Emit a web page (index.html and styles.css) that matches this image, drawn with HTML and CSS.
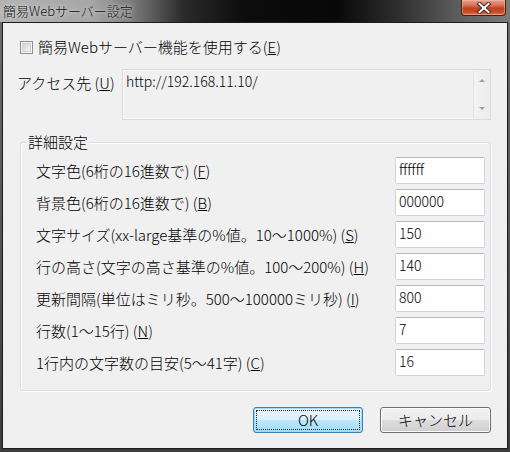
FILE: index.html
```html
<!DOCTYPE html>
<html lang="ja">
<head>
<meta charset="utf-8">
<title>簡易Webサーバー設定</title>
<link rel="stylesheet" href="styles.css">
</head>
<body>
<div class="window">
  <div class="titlebar">
    <span class="title">簡易Webサーバー設定</span>
    <span class="close-btn">
      <svg width="18" height="12" viewBox="0 0 18 12">
        <path d="M4.5 2 L13.5 10 M13.5 2 L4.5 10" stroke="#3a2a2a" stroke-width="4" stroke-linecap="square" fill="none"/>
        <path d="M4.5 2 L13.5 10 M13.5 2 L4.5 10" stroke="#ffffff" stroke-width="2" stroke-linecap="square" fill="none"/>
      </svg>
    </span>
  </div>
  <div class="client">
    <label class="check-row">
      <input type="checkbox" class="check">
      <span>簡易Webサーバー機能を使用する(<span class="key">E</span>)</span>
    </label>
    <div class="access-row">
      <span class="access-label">アクセス先 (<span class="key">U</span>)</span>
      <div class="addr">
        <div class="addr-text">http://192.168.11.10/</div>
        <div class="scroll">
          <span class="arrow-up"></span>
          <span class="arrow-down"></span>
        </div>
      </div>
    </div>
    <div class="group">
      <span class="group-title">詳細設定</span>
      <div class="field"><span class="lbl">文字色(6桁の16進数で) (<span class="key">F</span>)</span><input class="txt" type="text" value="ffffff"></div>
      <div class="field"><span class="lbl">背景色(6桁の16進数で) (<span class="key">B</span>)</span><input class="txt" type="text" value="000000"></div>
      <div class="field"><span class="lbl">文字サイズ(xx-large基準の%値。10～1000%) (<span class="key">S</span>)</span><input class="txt" type="text" value="150"></div>
      <div class="field"><span class="lbl">行の高さ(文字の高さ基準の%値。100～200%) (<span class="key">H</span>)</span><input class="txt" type="text" value="140"></div>
      <div class="field"><span class="lbl">更新間隔(単位はミリ秒。500～100000ミリ秒) (<span class="key">I</span>)</span><input class="txt" type="text" value="800"></div>
      <div class="field"><span class="lbl">行数(1～15行) (<span class="key">N</span>)</span><input class="txt" type="text" value="7"></div>
      <div class="field"><span class="lbl">1行内の文字数の目安(5～41字) (<span class="key">C</span>)</span><input class="txt" type="text" value="16"></div>
    </div>
    <div class="buttons">
      <button class="btn btn-ok">OK</button>
      <button class="btn btn-cancel">キャンセル</button>
    </div>
  </div>
</div>
</body>
</html>
```
FILE: styles.css
```css
html, body {
  margin: 0;
  padding: 0;
  background: #1a1a1a;
}
body {
  font-family: "Noto Sans CJK JP", "Noto Sans", sans-serif;
  font-size: 15px;
  font-weight: 300;
  color: #000;
}
.window {
  width: 510px;
  height: 452px;
  display: flex;
  flex-direction: column;
  background: linear-gradient(to bottom, #6e6e6e, #3c3c3c);
  box-sizing: border-box;
}
.titlebar {
  height: 22px;
  flex: 0 0 22px;
  display: flex;
  justify-content: space-between;
  align-items: flex-start;
  background: linear-gradient(to right, #b4b4b4 0%, #a6a6a6 18%, #7a7a7a 26%, #2a2a2a 36%, #0c0c0c 48%, #080808 66%, #2e2e2e 78%, #5e5e5e 90%, #7a7a7a 100%);
}
.title {
  font-size: 13px;
  line-height: 18px;
  margin: 2px 0 0 3px;
  color: #111;
  text-shadow: 0 0 6px rgba(230,230,230,0.9), 0 0 3px rgba(220,220,220,0.8);
}
.close-btn {
  width: 45px;
  height: 16px;
  margin-right: 4px;
  box-sizing: border-box;
  border: 1px solid #4a1c14;
  border-top: none;
  border-radius: 0 0 4px 4px;
  background: linear-gradient(to bottom, #e4a08c 0%, #d6745a 35%, #c2401f 55%, #c84a28 80%, #e07a52 100%);
  box-shadow: inset 0 0 0 1px rgba(255,200,180,0.45);
  display: flex;
  align-items: center;
  justify-content: center;
}
.close-btn svg {
  display: block;
}
.client {
  flex: 1;
  margin: 0 2px 3px 2px;
  border: 1px solid #1b1b1b;
  background: #f0f0f0;
  padding: 0 16px 0 14px;
  display: flex;
  flex-direction: column;
}
.key {
  text-decoration: underline;
  text-underline-offset: 1px;
}
.check-row {
  display: flex;
  align-items: center;
  gap: 5px;
  height: 18px;
  line-height: 18px;
  margin-top: 15px;
  padding-left: 3px;
}
.check {
  appearance: none;
  -webkit-appearance: none;
  margin: 0;
  width: 13px;
  height: 13px;
  box-sizing: border-box;
  border: 1px solid #8e8f8f;
  background: linear-gradient(135deg, #c9c9c9 0%, #e6e6e6 55%, #f8f8f8 100%);
  box-shadow: inset 0 0 0 1px #f4f4f4, inset 0 0 0 2px #d2d2d2;
}
.access-row {
  display: flex;
  margin-top: 13px;
  height: 51px;
}
.access-label {
  flex: 0 0 105px;
  line-height: 18px;
  padding-top: 5px;
}
.addr {
  flex: 1;
  display: flex;
  box-sizing: border-box;
  border: 1px solid #d9dcdf;
  box-shadow: inset 0 0 0 1px #fafafa;
  background: #f0f0f0;
}
.addr-text {
  flex: 1;
  font-size: 14px;
  line-height: 18px;
  padding: 2px 3px;
}
.scroll {
  flex: 0 0 16px;
  border-left: 1px solid #e4e4e4;
  background: linear-gradient(to right, #f3f3f3, #ececec);
  display: flex;
  flex-direction: column;
  justify-content: space-between;
  align-items: center;
  padding: 9px 0 9px;
}
.arrow-up, .arrow-down {
  width: 0;
  height: 0;
  border-left: 3px solid transparent;
  border-right: 3px solid transparent;
}
.arrow-up {
  border-bottom: 3px solid #a0a0a0;
}
.arrow-down {
  border-top: 3px solid #a0a0a0;
}
.group {
  position: relative;
  margin: 22px 0 0 3px;
  border: 1px solid #d5dfe5;
  border-radius: 3px;
  box-shadow: inset 1px 1px 0 #ffffff, 1px 1px 0 #ffffff;
  padding: 14px 5px 14px 15px;
  display: flex;
  flex-direction: column;
  gap: 5px;
}
.group-title {
  position: absolute;
  top: -10px;
  left: 5px;
  padding: 0 2px;
  background: #f0f0f0;
  line-height: 18px;
}
.field {
  display: flex;
  align-items: center;
  justify-content: space-between;
  height: 27px;
}
.lbl {
  line-height: 18px;
  white-space: nowrap;
}
.txt {
  width: 90px;
  height: 27px;
  box-sizing: border-box;
  margin: 0;
  border: 1px solid #d0d3d6;
  border-top-color: #b8bbbf;
  border-radius: 2px;
  background: #ffffff;
  font-family: "Noto Sans CJK JP", "Noto Sans", sans-serif;
  font-size: 14px;
  font-weight: 300;
  padding: 0 3px 3px 3px;
  color: #000;
  outline: none;
}
.buttons {
  display: flex;
  justify-content: flex-end;
  gap: 17px;
  margin-top: 16px;
}
.btn {
  height: 26px;
  box-sizing: border-box;
  border-radius: 3px;
  font-family: "Noto Sans CJK JP", "Noto Sans", sans-serif;
  font-size: 15px;
  font-weight: 300;
  line-height: 18px;
  padding: 0;
  color: #000;
}
.btn-ok {
  width: 110px;
  border: 1px solid #3c7fb1;
  background: linear-gradient(to bottom, #eaf6fd 0%, #d9f0fc 50%, #bee6fd 52%, #a7d9f5 100%);
  box-shadow: inset 0 0 0 1px #9fdcf8;
  outline: 1px dotted #3a1a1a;
  outline-offset: -4px;
}
.btn-cancel {
  width: 111px;
  border: 1px solid #707070;
  background: linear-gradient(to bottom, #f2f2f2 0%, #ebebeb 50%, #dddddd 52%, #cfcfcf 100%);
  box-shadow: inset 0 0 0 1px #fcfcfc;
}
```
